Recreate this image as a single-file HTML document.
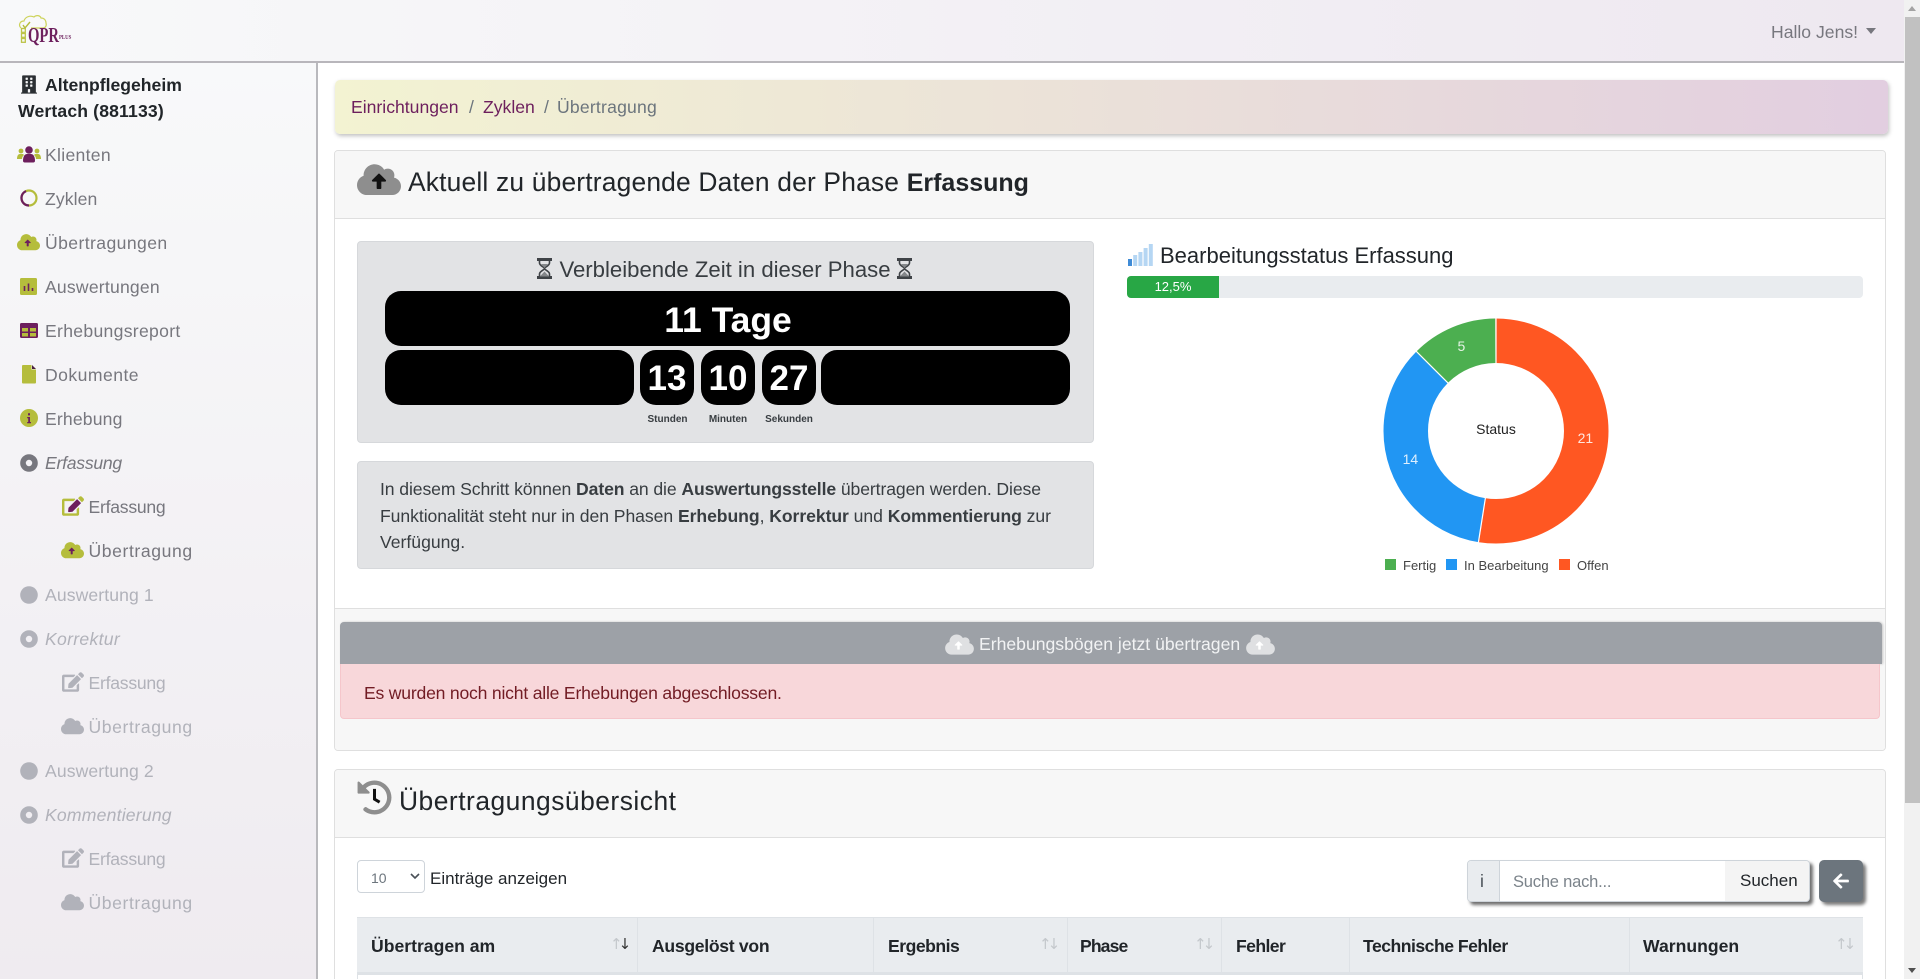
<!DOCTYPE html>
<html lang="de"><head><meta charset="utf-8"><title>Übertragung</title>
<style>
html,body{margin:0;padding:0;width:1920px;height:979px;overflow:hidden;background:#fff}
body{position:relative;font-family:"Liberation Sans",Arial,sans-serif;font-size:17.6px;color:#212529}
.a{position:absolute;box-sizing:border-box}
.t{position:absolute;white-space:nowrap;line-height:24px;height:24px}
.c{text-align:center}
b{font-weight:700}
svg{position:absolute;display:block;overflow:visible}
.n{color:#77777e;letter-spacing:.3px}.d{color:#b1b2ba;letter-spacing:.3px}
.cb{background:#000;position:absolute;border-radius:16px;height:55px}
.th{position:absolute;top:917px;height:56px;width:1px;background:#dee2e6}
.s{position:absolute;top:934px;font:15px/20px "DejaVu Sans",sans-serif;letter-spacing:-4px;color:#c4c8cc;white-space:nowrap}
</style></head><body>
<svg width="0" height="0" style="position:absolute"><defs>
<path id="cloud" d="M537.6 226.6c4.1-10.7 6.4-22.4 6.4-34.6 0-53-43-96-96-96-19.7 0-38.1 6-53.3 16.2C367 64.2 315.3 32 256 32c-88.4 0-160 71.6-160 160 0 2.7.1 5.4.2 8.1C40.2 219.8 0 273.2 0 336c0 79.5 64.5 144 144 144h368c70.7 0 128-57.3 128-128 0-61.9-44-113.6-102.4-125.4z"/>
<path id="arr" d="M393.4 288H328v112c0 8.8-7.2 16-16 16h-48c-8.8 0-16-7.2-16-16V288h-65.4c-14.3 0-21.4-17.2-11.3-27.3l105.4-105.4c6.2-6.2 16.4-6.2 22.6 0l105.4 105.4c10.1 10.1 2.9 27.3-11.3 27.3z"/>
<path id="pen" d="M402.6 83.2l90.2 90.2c3.8 3.8 3.8 10 0 13.8L274.4 405.6l-92.8 10.3c-12.4 1.4-22.9-9.1-21.5-21.5l10.3-92.8L388.8 83.2c3.8-3.8 10-3.8 13.8 0z"/>
<path id="tip" d="M564.6 60.3l-48.8-48.8c-15.2-15.2-39.9-15.2-55.2 0l-35.4 35.4c-3.8 3.8-3.8 10 0 13.8l90.2 90.2c3.8 3.8 10 3.8 13.8 0l35.4-35.4c15.2-15.3 15.2-40 0-55.2z"/>
<path id="box" d="M384 346.2V448H64V128h229.8c3.2 0 6.2-1.3 8.5-3.5l40-40c7.6-7.6 2.2-20.5-8.5-20.5H48C21.5 64 0 85.5 0 112v352c0 26.5 21.5 48 48 48h352c26.5 0 48-21.5 48-48V306.2c0-10.7-12.9-16-20.5-8.5l-40 40c-2.2 2.3-3.5 5.3-3.5 8.5z"/>
<g id="hg" fill="none" stroke="#3f4347"><path d="M1 1.500h15M1 19.500h15" stroke-width="3"/><path d="M3.500 2v3c0 3 5 4 5 5.500s-5 2.500-5 5.500v3M13.500 2v3c0 3-5 4-5 5.500s5 2.500 5 5.500v3" stroke-width="1.600"/><path d="M5 6h7l-3.500 4zM3.800 18.500l4.700-5 4.700 5z" fill="#85888b" stroke="none"/></g>
</defs></svg>

<!-- navbar -->
<div class="a" style="left:0;top:0;width:1904px;height:63px;background:linear-gradient(90deg,#f8f9fa,#eee8f0);border-bottom:2px solid #b8b6bb"></div>
<svg style="left:17px;top:13px" width="60" height="36" viewBox="0 0 60 36">
<path d="M4 15c-3-3-1-7 3-7 1-4 6-6 10-4 2-2 6-2 7 1 3 0 5 2 5 5 1 3-1 5-3 5H14" fill="none" stroke="#cdd35a" stroke-width="1.200"/>
<path d="M6 12l2 3 5-6" fill="none" stroke="#b5bd3c" stroke-width="1.400"/>
<g fill="none" stroke="#bcc348" stroke-width="1.300"><rect x="4.500" y="15.500" width="3.800" height="3.800"/><rect x="4.500" y="20.500" width="3.800" height="3.800"/><rect x="4.500" y="25.500" width="3.800" height="3.800"/></g>
<text transform="translate(11 29) scale(1 1.45)" font-family="'Liberation Serif',serif" font-weight="700" font-size="14.700" fill="#6d1f5d">QPR</text>
<text transform="translate(42 26) scale(1 1.2)" font-family="'Liberation Serif',serif" font-weight="700" font-size="4.800" fill="#6d1f5d">PLUS</text>
</svg>
<div class="t n" style="left:1771px;top:20px;letter-spacing:0">Hallo Jens!</div>
<div class="a" style="left:1866px;top:28px;width:0;height:0;border:5.500px solid transparent;border-top:6px solid #77777e;border-bottom:0"></div>

<!-- sidebar -->
<div class="a" style="left:0;top:63px;width:318px;height:916px;background:linear-gradient(180deg,#f8f9fa,#efebf0);border-right:2px solid #b9b9bd"></div>
<svg style="left:21px;top:75px" width="16" height="19" viewBox="0 0 448 512"><path fill="#2b2f33" d="M436 480h-20V24c0-13.300-10.700-24-24-24H56C42.700 0 32 10.700 32 24v456H12c-6.600 0-12 5.400-12 12v20h448v-20c0-6.600-5.400-12-12-12zM128 76c0-6.600 5.400-12 12-12h40c6.600 0 12 5.400 12 12v40c0 6.600-5.400 12-12 12h-40c-6.600 0-12-5.400-12-12V76zm0 96c0-6.600 5.400-12 12-12h40c6.600 0 12 5.400 12 12v40c0 6.600-5.400 12-12 12h-40c-6.600 0-12-5.400-12-12v-40zm52 148h-40c-6.600 0-12-5.400-12-12v-40c0-6.600 5.400-12 12-12h40c6.600 0 12 5.400 12 12v40c0 6.600-5.400 12-12 12zm76 160h-64v-84c0-6.600 5.400-12 12-12h40c6.600 0 12 5.400 12 12v84zm64-172c0 6.600-5.400 12-12 12h-40c-6.600 0-12-5.400-12-12v-40c0-6.600 5.400-12 12-12h40c6.600 0 12 5.400 12 12v40zm0-96c0 6.600-5.400 12-12 12h-40c-6.600 0-12-5.400-12-12v-40c0-6.600 5.400-12 12-12h40c6.600 0 12 5.400 12 12v40zm0-96c0 6.600-5.400 12-12 12h-40c-6.600 0-12-5.400-12-12V76c0-6.600 5.400-12 12-12h40c6.600 0 12 5.400 12 12v40z"/></svg>
<div class="t" style="left:45px;top:73px;font-weight:700">Altenpflegeheim</div>
<div class="t" style="left:18px;top:99px;font-weight:700;letter-spacing:.15px">Wertach (881133)</div>

<div class="t n" style="left:45px;top:142.500px">Klienten</div>
<svg style="left:17px;top:146px" width="24" height="17" viewBox="0 0 24 17"><g fill="#b5bd3c"><circle cx="4" cy="5" r="2.400"/><circle cx="20" cy="5" r="2.400"/><path d="M0 13c0-3 1-5 3-5h3l1 1c-1 1-2 2-2 4zM24 13c0-3-1-5-3-5h-3l-1 1c1 1 2 2 2 4z"/></g><g fill="#6d1f5d"><circle cx="12" cy="4" r="3.800"/><path d="M6 15c0-5 2-7 4-7h4c2 0 4 2 4 7 0 1-1 1.500-1.500 1.500h-9c-.5 0-1.500-.5-1.500-1.500z"/></g></svg>

<div class="t n" style="left:45px;top:186.500px;letter-spacing:.1px">Zyklen</div>
<svg style="left:20px;top:189px" width="18" height="18" viewBox="0 0 18 18"><circle cx="9" cy="9" r="7.500" fill="none" stroke="#b5bd3c" stroke-width="2.200"/><path d="M9 16.500A7.500 7.500 0 0 1 6 2.100" fill="none" stroke="#6d1f5d" stroke-width="2.200"/></svg>

<div class="t n" style="left:45px;top:230.500px;letter-spacing:.4px">Übertragungen</div>
<svg style="left:17px;top:233px" width="23" height="18.400" viewBox="0 0 640 512"><use href="#cloud" fill="#b5bd3c"/><use href="#arr" fill="#6d1f5d" transform="translate(96 80) scale(.7)"/></svg>

<div class="t n" style="left:45px;top:274.500px;letter-spacing:.2px">Auswertungen</div>
<svg style="left:20px;top:278px" width="17" height="17" viewBox="0 0 17 17"><rect width="17" height="17" rx="1.500" fill="#b5bd3c"/><path d="M4.500 8v5M8.500 5.500V13M12.500 10v3" stroke="#6d1f5d" stroke-width="1.600"/></svg>

<div class="t n" style="left:45px;top:318.500px">Erhebungsreport</div>
<svg style="left:20px;top:323px" width="18" height="15" viewBox="0 0 18 15"><rect width="18" height="15" rx="1.500" fill="#6d1f5d"/><rect x="2" y="5" width="6" height="3.500" fill="#b5bd3c"/><rect x="10" y="5" width="6" height="3.500" fill="#b5bd3c"/><rect x="2" y="10" width="6" height="3.500" fill="#b5bd3c"/><rect x="10" y="10" width="6" height="3.500" fill="#b5bd3c"/></svg>

<div class="t n" style="left:45px;top:363px;letter-spacing:.45px">Dokumente</div>
<svg style="left:22px;top:365px" width="14" height="18.500" viewBox="0 0 14 18.500"><path d="M1 0h8.500v4.500H14V17.500a1 1 0 0 1-1 1H1a1 1 0 0 1-1-1V1a1 1 0 0 1 1-1z" fill="#b5bd3c"/><path d="M10 0l4 4h-4z" fill="#4a2040"/></svg>

<div class="t n" style="left:45px;top:407px;letter-spacing:.15px">Erhebung</div>
<svg style="left:20px;top:409px" width="18" height="18" viewBox="0 0 18 18"><circle cx="9" cy="9" r="9" fill="#b5bd3c"/><path d="M7.200 8h2.800v5h1v1.200H7.200V13h1v-3.800h-1zM8 4.200h2v2.200H8z" fill="#6d1f5d"/></svg>

<div class="t n" style="left:45px;top:451px;font-style:italic;letter-spacing:-.25px">Erfassung</div>
<svg style="left:20px;top:454px" width="18" height="18" viewBox="0 0 18 18"><circle cx="9" cy="9" r="6" fill="none" stroke="#77777e" stroke-width="5.600"/></svg>

<div class="t n" style="left:88.500px;top:495px;letter-spacing:-.25px">Erfassung</div>
<svg style="left:62px;top:496px" width="22" height="20" viewBox="0 0 576 512"><use href="#box" fill="#b5bd3c"/><use href="#pen" fill="#6d1f5d"/><use href="#tip" fill="#b5bd3c"/></svg>

<div class="t n" style="left:88.500px;top:539px;letter-spacing:.58px">Übertragung</div>
<svg style="left:61px;top:541px" width="23" height="18.400" viewBox="0 0 640 512"><use href="#cloud" fill="#b5bd3c"/><use href="#arr" fill="#6d1f5d" transform="translate(96 80) scale(.7)"/></svg>

<div class="t d" style="left:45px;top:583px;letter-spacing:.1px">Auswertung 1</div>
<svg style="left:20px;top:586px" width="18" height="18"><circle cx="9" cy="9" r="8.800" fill="#b1b2ba"/></svg>

<div class="t d" style="left:45px;top:627px;font-style:italic">Korrektur</div>
<svg style="left:20px;top:630px" width="18" height="18" viewBox="0 0 18 18"><circle cx="9" cy="9" r="6" fill="none" stroke="#b1b2ba" stroke-width="5.600"/></svg>

<div class="t d" style="left:88.500px;top:671px;letter-spacing:-.25px">Erfassung</div>
<svg style="left:62px;top:672px" width="22" height="20" viewBox="0 0 576 512"><g fill="#b1b2ba"><use href="#box"/><use href="#pen"/><use href="#tip"/></g></svg>

<div class="t d" style="left:88.500px;top:715px;letter-spacing:.58px">Übertragung</div>
<svg style="left:61px;top:717px" width="23" height="18.400" viewBox="0 0 640 512"><use href="#cloud" fill="#b1b2ba"/></svg>

<div class="t d" style="left:45px;top:759px;letter-spacing:.1px">Auswertung 2</div>
<svg style="left:20px;top:762px" width="18" height="18"><circle cx="9" cy="9" r="8.800" fill="#b1b2ba"/></svg>

<div class="t d" style="left:45px;top:803px;font-style:italic;letter-spacing:.2px">Kommentierung</div>
<svg style="left:20px;top:806px" width="18" height="18" viewBox="0 0 18 18"><circle cx="9" cy="9" r="6" fill="none" stroke="#b1b2ba" stroke-width="5.600"/></svg>

<div class="t d" style="left:88.500px;top:847px;letter-spacing:-.25px">Erfassung</div>
<svg style="left:62px;top:848px" width="22" height="20" viewBox="0 0 576 512"><g fill="#b1b2ba"><use href="#box"/><use href="#pen"/><use href="#tip"/></g></svg>

<div class="t d" style="left:88.500px;top:891px;letter-spacing:.58px">Übertragung</div>
<svg style="left:61px;top:893px" width="23" height="18.400" viewBox="0 0 640 512"><use href="#cloud" fill="#b1b2ba"/></svg>

<!-- breadcrumb -->
<div class="a" style="left:335px;top:80px;width:1553px;height:54px;border-radius:5px;background:linear-gradient(90deg,#f3f3d2,#e2cee0);box-shadow:1px 2px 4px rgba(0,0,0,.25)"></div>
<div class="t" style="left:351px;top:95px;color:#6d1f5d">Einrichtungen</div>
<div class="t" style="left:469px;top:95px;color:#6c757d">/</div>
<div class="t" style="left:483px;top:95px;color:#6d1f5d">Zyklen</div>
<div class="t" style="left:544px;top:95px;color:#6c757d">/</div>
<div class="t" style="left:557px;top:95px;color:#6c757d;letter-spacing:.2px">Übertragung</div>

<!-- card 1 -->
<div class="a" style="left:334px;top:150px;width:1552px;height:601px;border:1px solid #dfdfdf;border-radius:4px;background:#fff;overflow:hidden">
  <div class="a" style="left:0;top:0;width:100%;height:68px;background:#f7f7f7;border-bottom:1px solid #dfdfdf"></div>
  <div class="a" style="left:0;top:457px;width:100%;height:143px;background:#f7f7f7;border-top:1px solid #dfdfdf"></div>
</div>
<svg style="left:357px;top:162px" width="44" height="35.200" viewBox="0 0 640 512"><use href="#cloud" fill="#8e8e8e"/><use href="#arr" fill="#111" transform="translate(75 40) scale(.85)"/></svg>
<div class="t" style="left:408px;top:169.500px;font-size:26.400px;letter-spacing:.18px">Aktuell zu übertragende Daten der Phase <b style="font-size:25px;letter-spacing:0">Erfassung</b></div>

<!-- timer -->
<div class="a" style="left:357px;top:241px;width:737px;height:202px;background:#e2e3e5;border:1px solid #d6d8db;border-radius:4px"></div>
<svg style="left:536px;top:258px" width="17" height="21" viewBox="0 0 17 21"><use href="#hg"/></svg>
<svg style="left:896px;top:258px" width="17" height="21" viewBox="0 0 17 21"><use href="#hg"/></svg>
<div class="t c" style="left:525px;top:258px;width:400px;font-size:22.150px;color:#383d41">Verbleibende Zeit in dieser Phase</div>
<div class="cb" style="left:385px;top:291px;width:685px"></div>
<div class="t c" style="left:385.500px;top:301.500px;width:685px;height:36px;line-height:36px;color:#fff;font-weight:700;font-size:35.500px">11 Tage</div>
<div class="cb" style="left:385px;top:350px;width:249px"></div>
<div class="cb" style="left:640px;top:350px;width:54px"></div>
<div class="cb" style="left:701px;top:350px;width:54px"></div>
<div class="cb" style="left:762px;top:350px;width:54px"></div>
<div class="cb" style="left:821px;top:350px;width:249px"></div>
<div class="t c" style="left:640px;top:360.500px;width:54px;height:36px;line-height:36px;color:#fff;font-weight:700;font-size:35px">13</div>
<div class="t c" style="left:701px;top:360.500px;width:54px;height:36px;line-height:36px;color:#fff;font-weight:700;font-size:35px">10</div>
<div class="t c" style="left:762px;top:360.500px;width:54px;height:36px;line-height:36px;color:#fff;font-weight:700;font-size:35px">27</div>
<div class="t c" style="left:637.500px;top:408px;width:60px;font-size:10px;font-weight:700;color:#383d41">Stunden</div>
<div class="t c" style="left:698px;top:408px;width:60px;font-size:10px;font-weight:700;color:#383d41">Minuten</div>
<div class="t c" style="left:759px;top:408px;width:60px;font-size:10px;font-weight:700;color:#383d41">Sekunden</div>

<!-- info -->
<div class="a" style="left:357px;top:461px;width:737px;height:108px;background:#e2e3e5;border:1px solid #d6d8db;border-radius:4px"></div>
<div class="t" style="left:380px;top:477px;color:#383d41;letter-spacing:-.1px">In diesem Schritt können <b>Daten</b> an die <b>Auswertungsstelle</b> übertragen werden. Diese</div>
<div class="t" style="left:380px;top:504px;color:#383d41;letter-spacing:-.06px">Funktionalität steht nur in den Phasen <b>Erhebung</b>, <b>Korrektur</b> und <b>Kommentierung</b> zur</div>
<div class="t" style="left:380px;top:530px;color:#383d41">Verfügung.</div>

<!-- right -->
<svg style="left:1128px;top:244px" width="25" height="22" viewBox="0 0 25 22"><rect y="15" width="4" height="7" fill="#3f8bd6"/><rect x="5.200" y="11" width="4" height="11" fill="#b5d6f3"/><rect x="10.400" y="8" width="4" height="14" fill="#b5d6f3"/><rect x="15.600" y="4" width="4" height="18" fill="#b5d6f3"/><rect x="20.800" width="4" height="22" fill="#b5d6f3"/></svg>
<div class="t" style="left:1160px;top:244px;font-size:22px">Bearbeitungsstatus Erfassung</div>
<div class="a" style="left:1127px;top:276px;width:736px;height:22px;background:#e9ecef;border-radius:4px;overflow:hidden"><div class="a" style="left:0;top:0;width:92px;height:22px;background:#28a745"></div></div>
<div class="t c" style="left:1127px;top:275px;width:92px;color:#fff;font-size:13px">12,5%</div>

<svg style="left:1380px;top:315px" width="232" height="232" viewBox="-116 -116 232 232">
<g fill="none" stroke-width="44.500" transform="rotate(-90)">
<circle r="90.250" stroke="#ff5722" pathLength="40" stroke-dasharray="21 19"/>
<circle r="90.250" stroke="#2196f3" pathLength="40" stroke-dasharray="14 26" stroke-dashoffset="-21"/>
<circle r="90.250" stroke="#4caf50" pathLength="40" stroke-dasharray="5 35" stroke-dashoffset="-35"/>
</g>
<g stroke="#fff" stroke-width="1.200"><path d="M0-66V-114M-10.600 67-17.800 112.600M-46.700-46.700-81-81"/></g>
<g font-family="'Liberation Sans',sans-serif" font-size="14" text-anchor="middle" fill="#fff" fill-opacity=".85">
<text x="-34.600" y="-80">5</text><text x="-85.600" y="33">14</text><text x="89.400" y="12">21</text></g>
<text x="0" y="3" font-family="'Liberation Sans',sans-serif" font-size="14" text-anchor="middle" fill="#222">Status</text>
</svg>
<div class="a" style="left:1385px;top:559px;width:11px;height:11px;background:#4caf50"></div>
<div class="t" style="left:1403px;top:554px;font-size:13px;color:#444">Fertig</div>
<div class="a" style="left:1446px;top:559px;width:11px;height:11px;background:#2196f3"></div>
<div class="t" style="left:1464px;top:554px;font-size:13px;color:#444">In Bearbeitung</div>
<div class="a" style="left:1559px;top:559px;width:11px;height:11px;background:#ff5722"></div>
<div class="t" style="left:1577px;top:554px;font-size:13px;color:#444">Offen</div>

<!-- button + alert -->
<div class="a" style="left:340px;top:622px;width:1542px;height:42px;background:#9da1a7;border-radius:4px 4px 0 0;box-shadow:1px 0 2px rgba(0,0,0,.2)"></div>
<svg style="left:945px;top:633px" width="29" height="23" viewBox="0 0 640 512"><use href="#cloud" fill="#dfe0e2"/><use href="#arr" fill="#fff" transform="translate(96 80) scale(.7)"/></svg>
<div class="t" style="left:979px;top:632px;color:#f2f3f4">Erhebungsbögen jetzt übertragen</div>
<svg style="left:1246px;top:633px" width="29" height="23" viewBox="0 0 640 512"><use href="#cloud" fill="#dfe0e2"/><use href="#arr" fill="#fff" transform="translate(96 80) scale(.7)"/></svg>
<div class="a" style="left:340px;top:664px;width:1540px;height:55px;background:#f8d7da;border:1px solid #f5c6cb;border-top:0;border-radius:0 0 4px 4px"></div>
<div class="t" style="left:364px;top:681px;color:#721c24;letter-spacing:-.21px">Es wurden noch nicht alle Erhebungen abgeschlossen.</div>

<!-- card 2 -->
<div class="a" style="left:334px;top:769px;width:1552px;height:230px;border:1px solid #dfdfdf;border-radius:4px;background:#fff"></div>
<div class="a" style="left:335px;top:770px;width:1550px;height:68px;background:#f7f7f7;border-bottom:1px solid #dfdfdf;border-radius:4px 4px 0 0"></div>
<svg style="left:357px;top:780px" width="35" height="35" viewBox="0 0 512 512"><path fill="#8e8e8e" d="M504 255.531c.253 136.640-111.180 248.372-247.820 248.468-59.015.042-113.223-20.530-155.822-54.911-11.077-8.940-11.905-25.541-1.839-35.607l11.267-11.267c8.609-8.609 22.353-9.551 31.891-1.984C173.062 425.135 212.781 440 256 440c101.705 0 184-82.311 184-184 0-101.705-82.311-184-184-184-48.814 0-93.149 18.969-126.068 49.932l50.754 50.754c10.080 10.080 2.941 27.314-11.313 27.314H24c-8.837 0-16-7.163-16-16V38.627c0-14.254 17.234-21.393 27.314-11.314l49.372 49.372C129.209 34.136 189.552 8 256 8c136.810 0 247.747 110.780 248 247.531z"/><path d="M256 130V280l75 45" fill="none" stroke="#111" stroke-width="44"/></svg>
<div class="t" style="left:399px;top:788.500px;font-size:26.400px;letter-spacing:.5px">Übertragungsübersicht</div>

<div class="a" style="left:357px;top:860px;width:68px;height:33px;background:#fff;border:1px solid #ced4da;border-radius:4px"></div>
<div class="t" style="left:371px;top:866px;font-size:14px;color:#6c757d">10</div>
<svg style="left:410px;top:873px" width="10" height="7" viewBox="0 0 10 7"><path d="M1 1l4 4 4-4" fill="none" stroke="#495057" stroke-width="1.600"/></svg>
<div class="t" style="left:430px;top:866.500px;font-size:17px">Einträge anzeigen</div>

<!-- search -->
<div class="a" style="left:1467px;top:860px;width:343px;height:42px;border-radius:4px;background:#fff;border:1px solid #ced4da;box-shadow:3px 3px 3px #6e6e6e;overflow:hidden">
  <div class="a" style="left:0;top:0;width:32px;height:40px;background:#e9ecef;border-right:1px solid #ced4da"></div>
  <div class="a" style="left:257px;top:0;width:85px;height:40px;background:#f4f4f4"></div>
</div>
<div class="t" style="left:1480px;top:869px;color:#495057">i</div>
<div class="t" style="left:1513px;top:870px;color:#7b838a;font-size:16.500px;letter-spacing:-.2px">Suche nach...</div>
<div class="t" style="left:1740px;top:869px;color:#212529;font-size:17px">Suchen</div>
<div class="a" style="left:1819px;top:860px;width:44px;height:42px;background:#6c757d;border-radius:5px;box-shadow:3px 3px 3px #7a7a7a"></div>
<svg style="left:1833px;top:872px" width="16" height="18" viewBox="0 0 448 512"><path fill="#fff" d="M257.500 445.100l-22.200 22.200c-9.400 9.400-24.600 9.400-33.900 0L7 273c-9.400-9.400-9.400-24.600 0-33.900L201.400 44.700c9.400-9.400 24.600-9.400 33.900 0l22.200 22.200c9.500 9.500 9.300 25-.4 34.300L136.600 216H424c13.300 0 24 10.700 24 24v32c0 13.300-10.700 24-24 24H136.600l120.500 114.800c9.800 9.300 10 24.800.4 34.300z"/></svg>

<!-- table header -->
<div class="a" style="left:357px;top:917px;width:1506px;height:58px;background:#e9ecef;border-top:1px solid #dee2e6;border-bottom:3px solid #dee2e6"></div>
<div class="a" style="left:357px;top:975px;width:1px;height:4px;background:#dee2e6"></div>
<div class="a" style="left:1862px;top:975px;width:1px;height:4px;background:#dee2e6"></div>
<div class="th" style="left:637px"></div><div class="th" style="left:873px"></div><div class="th" style="left:1067px"></div><div class="th" style="left:1221px"></div><div class="th" style="left:1349px"></div><div class="th" style="left:1629px"></div>
<div class="t" style="left:371px;top:934px;font-weight:700">Übertragen am</div>
<div class="t" style="left:652px;top:934px;font-weight:700;letter-spacing:-.3px">Ausgelöst von</div>
<div class="t" style="left:888px;top:934px;font-weight:700;letter-spacing:-.5px">Ergebnis</div>
<div class="t" style="left:1080px;top:934px;font-weight:700;letter-spacing:-.9px">Phase</div>
<div class="t" style="left:1236px;top:934px;font-weight:700;letter-spacing:-.6px">Fehler</div>
<div class="t" style="left:1363px;top:934px;font-weight:700;letter-spacing:-.5px">Technische Fehler</div>
<div class="t" style="left:1643px;top:934px;font-weight:700">Warnungen</div>
<div class="s" style="left:610px">↑<span style="color:#333">↓</span></div>
<div class="s" style="left:1039px">↑↓</div>
<div class="s" style="left:1194px">↑↓</div>
<div class="s" style="left:1835px">↑↓</div>

<!-- scrollbar -->
<div class="a" style="left:1904px;top:0;width:16px;height:979px;background:#f1f1f1"></div>
<div class="a" style="left:1905px;top:17px;width:15px;height:786px;background:#c1c1c1"></div>
<div class="a" style="left:1908px;top:6px;width:0;height:0;border:4.500px solid transparent;border-bottom:5px solid #a3a3a3;border-top:0"></div>
<div class="a" style="left:1908px;top:968px;width:0;height:0;border:4.500px solid transparent;border-top:5px solid #505050;border-bottom:0"></div>
</body></html>
